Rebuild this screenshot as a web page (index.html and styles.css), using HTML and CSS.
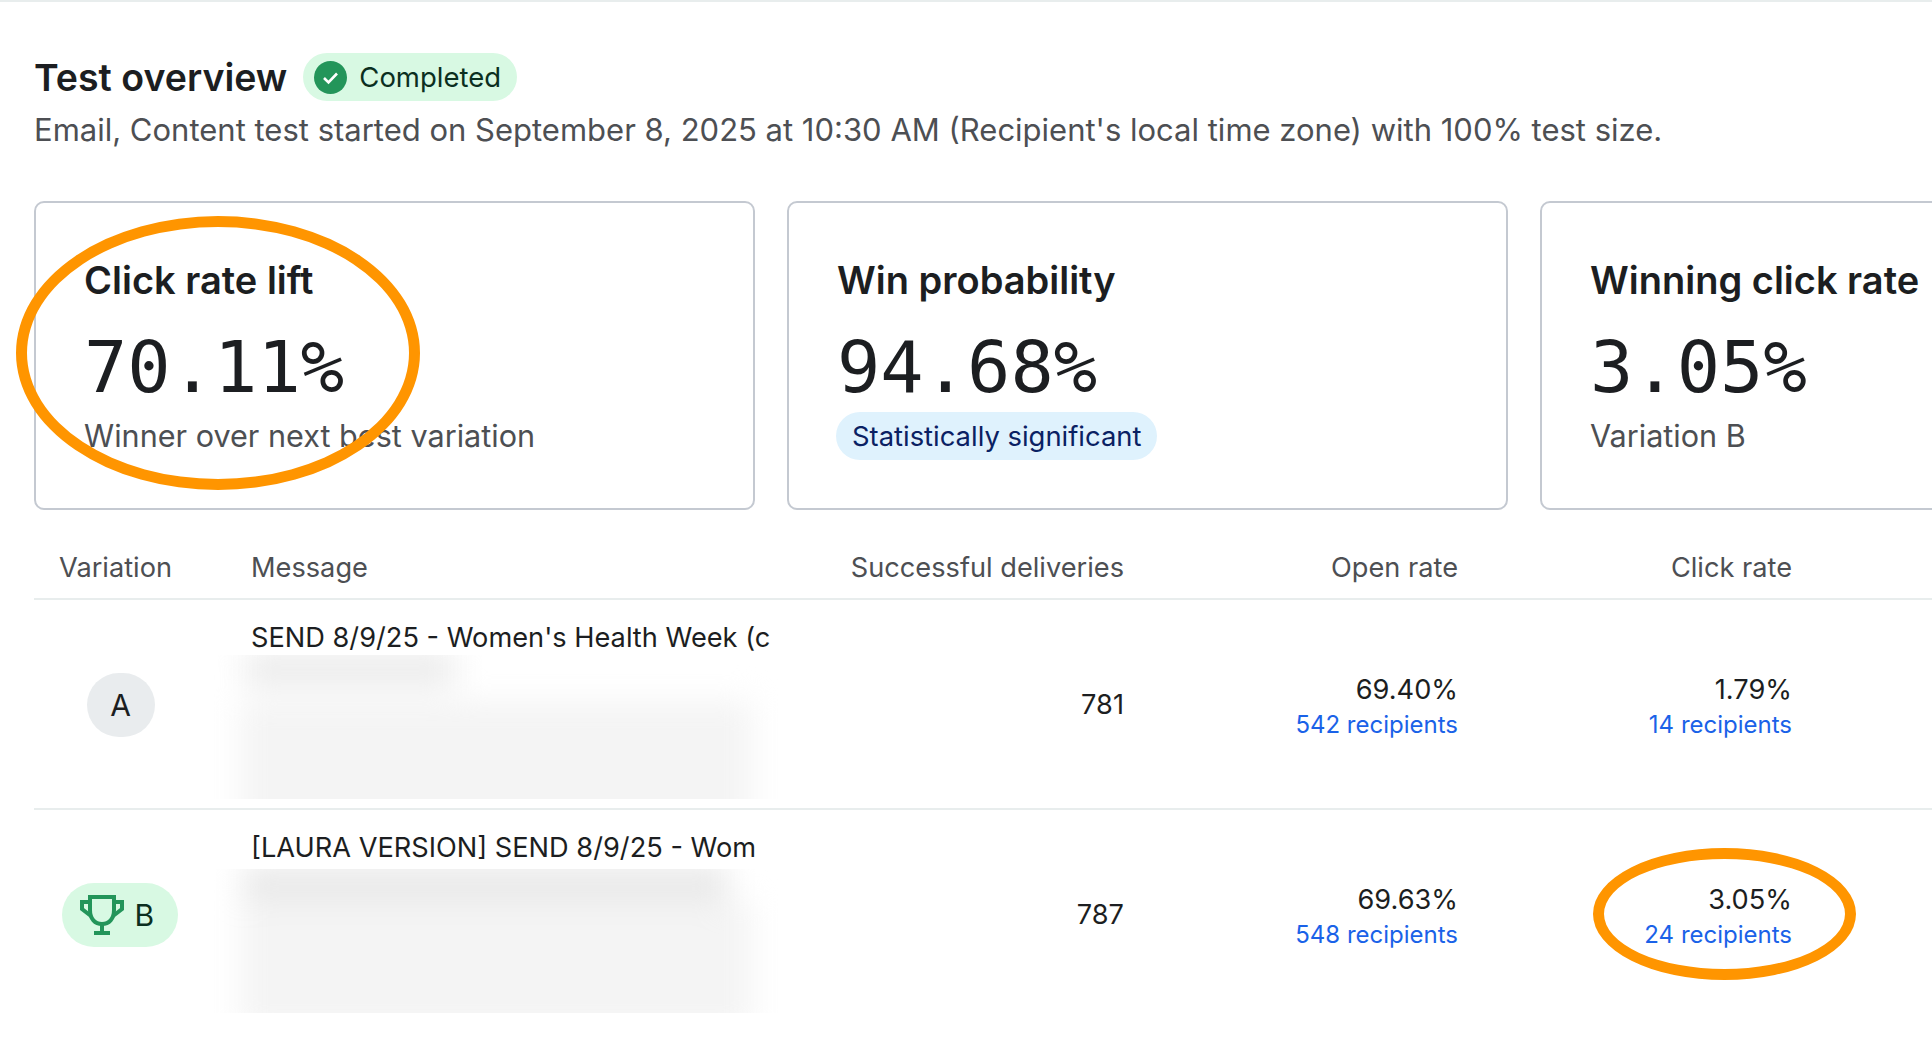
FILE: index.html
```html
<!DOCTYPE html>
<html lang="en">

<head>
    <meta charset="UTF-8">
    <meta name="viewport" content="width=device-width, initial-scale=1.0">
    <title>Test overview</title>
    <link rel="stylesheet" href="styles.css">
</head>

<body>

    <div class="page">
        <div class="title-row">
            <h1 class="title">Test overview</h1>
            <div class="status-pill">
                <svg class="status-icon" viewBox="0 0 33 33">
                    <circle cx="16.5" cy="16.5" r="16.5" fill="#23955a"></circle>
                    <path d="M10 17l4.5 4.5L23 12.5" fill="none" stroke="#fff" stroke-width="2.6"></path>
                </svg>
                <span>Completed</span>
            </div>
        </div>
        <p class="subtitle">Email, Content test started on September 8, 2025 at 10:30 AM (Recipient's local time zone) with 100% test size.</p>

        <div class="cards">
            <div class="card">
                <div class="card-title">Click rate lift</div>
                <div class="card-value">70.11%</div>
                <div class="card-note">Winner over next best variation</div>
            </div>
            <div class="card">
                <div class="card-title">Win probability</div>
                <div class="card-value">94.68%</div>
                <div class="significant-pill">Statistically significant</div>
            </div>
            <div class="card">
                <div class="card-title">Winning click rate</div>
                <div class="card-value">3.05%</div>
                <div class="card-note">Variation B</div>
            </div>
        </div>

        <div class="table">
            <div class="table-row table-head">
                <div class="cell-variation">Variation</div>
                <div>Message</div>
                <div class="cell-number">Successful deliveries</div>
                <div class="cell-number">Open rate</div>
                <div class="cell-number">Click rate</div>
            </div>

            <div class="table-row">
                <div class="cell-badge"><span class="badge">A</span></div>
                <div class="cell-message">
                    <div class="message-name">SEND 8/9/25 - Women's Health Week (c</div>
                    <div class="message-preview">
                        <div class="preview-blur">
                            <div class="bar bar-a1"></div>
                            <div class="bar bar-a2"></div>
                            <div class="bar bar-a3"></div>
                        </div>
                    </div>
                </div>
                <div class="cell-number cell-count">781</div>
                <div class="cell-number cell-stat">69.40%<a class="recipients">542 recipients</a></div>
                <div class="cell-number cell-stat">1.79%<a class="recipients">14 recipients</a></div>
            </div>

            <div class="table-row">
                <div class="cell-badge">
                    <span class="badge badge-winner">
                        <svg class="trophy" viewBox="0 0 44 40" fill="none" stroke="#23955a" stroke-width="4">
                            <path d="M10 2H34V15C34 24 29 29 22 29C15 29 10 24 10 15Z"></path>
                            <path d="M10 7H2V14L11 21"></path>
                            <path d="M34 7H42V14L33 21"></path>
                            <path d="M22 29V38M14 38H30"></path>
                        </svg>
                        B
                    </span>
                </div>
                <div class="cell-message">
                    <div class="message-name">[LAURA VERSION] SEND 8/9/25 - Wom</div>
                    <div class="message-preview preview-second">
                        <div class="preview-blur">
                            <div class="bar bar-b1"></div>
                            <div class="bar bar-b2"></div>
                        </div>
                    </div>
                </div>
                <div class="cell-number cell-count">787</div>
                <div class="cell-number cell-stat">69.63%<a class="recipients">548 recipients</a></div>
                <div class="cell-number cell-stat">3.05%<a class="recipients">24 recipients</a></div>
            </div>
        </div>
    </div>

    <!-- hand drawn markup on top of the screenshot -->
    <div class="ring ring-lift"></div>
    <div class="ring ring-click"></div>

</body>

</html>
```

FILE: styles.css
```css
body {
    margin: 0;
    height: 1048px;
    overflow: hidden;
    position: relative;
    background: #fff;
    font-family: Inter, "Noto Sans", sans-serif;
    color: #1c1e21;
}

.page {
    border-top: 2px solid #e8eded;
    padding: 51px 0 0 34px;
}

.title-row {
    display: flex;
    align-items: center;
    gap: 16px;
    height: 48px;
}

.title {
    margin: 0;
    font-size: 37.5px;
    font-weight: 600;
}

.status-pill {
    display: flex;
    align-items: center;
    gap: 12px;
    height: 48px;
    padding: 0 16px 0 11px;
    border-radius: 24px;
    background: #d8f9e3;
    color: #0b2f1f;
    font-size: 27.5px;
}

.status-icon {
    width: 33px;
    height: 33px;
}

.subtitle {
    margin: 10px 0 0;
    line-height: 38px;
    font-size: 31px;
    color: #4d4f53;
}

.cards {
    display: flex;
    gap: 32px;
    margin-top: 52px;
    overflow: hidden;
}

.card {
    flex: 0 0 auto;
    box-sizing: border-box;
    width: 721px;
    height: 309px;
    padding: 55px 48px 0;
    border: 2px solid #c4c9d1;
    border-radius: 10px;
}

.card-title {
    line-height: 44px;
    font-size: 38px;
    font-weight: 600;
}

.card-value {
    margin-top: 23px;
    line-height: 84px;
    font-family: "DejaVu Sans Mono", monospace;
    font-size: 72px;
}

.card-note {
    margin-top: 8px;
    line-height: 38px;
    font-size: 30.6px;
    color: #4d4f53;
}

.significant-pill {
    display: inline-block;
    height: 48px;
    margin: 3px 0 0 -1px;
    padding: 0 16px;
    line-height: 48px;
    border-radius: 24px;
    background: #dff2fd;
    color: #0a2163;
    font-size: 27.4px;
}

.table {
    font-size: 27.2px;
}

.table-row {
    display: grid;
    grid-template-columns: 217px 541px 332px 334px 334px 1fr;
    height: 208px;
    border-bottom: 2px solid #e8eded;
    align-items: center;
}

.table-row:last-child {
    border-bottom: none;
}

.table-head {
    box-sizing: border-box;
    height: 90px;
    padding-top: 27px;
    color: #4d4f53;
}

.cell-variation {
    padding-left: 25px;
}

.cell-badge {
    display: flex;
    justify-content: center;
    padding: 1px 44px 0 0;
}

.badge {
    display: flex;
    align-items: center;
    justify-content: center;
    width: 68px;
    height: 64px;
    border-radius: 32px;
    background: #e9ecee;
    font-size: 30px;
}

.badge-winner {
    box-sizing: border-box;
    justify-content: flex-start;
    gap: 11px;
    width: 116px;
    margin-left: -2px;
    padding-left: 18px;
    background: #d8f9e3;
    color: #0b2f1f;
}

.trophy {
    width: 44px;
    height: 40px;
}

.cell-message {
    align-self: start;
    padding-top: 20px;
}

.message-name {
    line-height: 35px;
    white-space: nowrap;
    overflow: hidden;
}

.message-preview {
    width: 570px;
    height: 144px;
    margin-left: -42px;
    overflow: hidden;
}

.preview-second {
    margin-top: 4px;
}

.preview-blur {
    filter: blur(15px);
}

.bar-a1 {
    width: 210px;
    height: 36px;
    margin: -4px 0 0 36px;
    background: #ececec;
}

.bar-a2 {
    width: 510px;
    height: 70px;
    margin: 14px 0 0 32px;
    background: #f4f4f4;
}

.bar-a3 {
    width: 510px;
    height: 60px;
    margin-left: 32px;
    background: #f4f4f4;
}

.bar-b1 {
    width: 485px;
    height: 36px;
    margin: -4px 0 0 34px;
    background: #e9e9e9;
}

.bar-b2 {
    width: 510px;
    height: 130px;
    margin-left: 32px;
    background: #f4f4f4;
}

.cell-number {
    text-align: right;
}

.cell-count {
    padding-top: 1px;
}

.cell-stat {
    padding-top: 4px;
}

.recipients {
    display: block;
    margin-top: 4px;
    font-size: 24px;
    color: #1a62e8;
}

.ring {
    position: absolute;
    box-sizing: border-box;
    border: 11px solid #ff9500;
    border-radius: 50%;
}

.ring-lift {
    left: 16px;
    top: 216px;
    width: 404px;
    height: 274px;
}

.ring-click {
    left: 1593px;
    top: 848px;
    width: 263px;
    height: 132px;
}
```
